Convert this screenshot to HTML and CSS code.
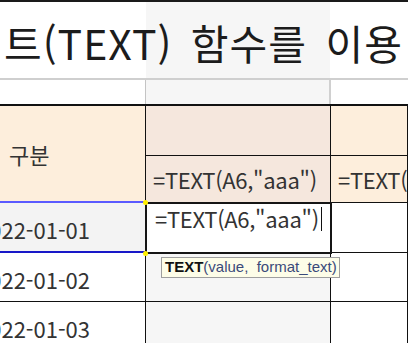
FILE: index.html
```html
<!doctype html>
<html lang="ko">
<head>
	<meta charset="UTF-8">
	<title>TEXT 함수</title>

	<link rel="stylesheet" href="styles.css">
</head>
<body>
	<div class="sheet">
		<div class="title">
			<h1>트(TEXT) 함수를 이용</h1>
		</div>
		<div class="spacer">
			<div class="col-a"></div>
			<div class="col-b"></div>
			<div class="col-c"></div>
		</div>

		<div class="grid">
			<div class="cell head head-a">구분</div>
			<div class="cell head head-b"></div>
			<div class="cell head head-c"></div>
			<div class="cell head head-b formula">=TEXT(A6,"aaa")</div>
			<div class="cell head head-c formula">=TEXT(A6,"aaa")</div>

			<div class="cell date selected"><span>2022-01-01</span></div>
			<div class="cell editing">
				<span class="edit-text">=TEXT(A6,"aaa")</span><span class="caret"></span>
				<div class="tip"><b>TEXT</b>(value,&nbsp; format_text)</div>
			</div>
			<div class="cell"></div>

			<div class="cell date"><span>2022-01-02</span></div>
			<div class="cell shaded"></div>
			<div class="cell"></div>

			<div class="cell date"><span>2022-01-03</span></div>
			<div class="cell shaded"></div>
			<div class="cell"></div>
		</div>
	</div>
</body>
</html>
```

FILE: styles.css
```css
html {
	box-sizing: border-box;
}

*, *:before, *:after {
	box-sizing: inherit;
}

body {
	margin: 0;
	width: 408px;
	height: 343px;
	overflow: hidden;
	background: #fff;
	font-family: "Noto Sans CJK KR", "Noto Sans", sans-serif;
	color: #222;
}

.sheet {
	border-top: 2px solid #1a1a1a;
}

.title {
	height: 78px;
	border-bottom: 2px solid #cfcfcf;
	background: linear-gradient(to right, #fff 146px, #f6f6f6 146px, #f6f6f6 330px, #fff 330px);
	overflow: hidden;
}

.title h1 {
	margin: 0;
	padding: 16px 0 0 4px;
	font-size: 41px;
	font-weight: normal;
	line-height: 48px;
	letter-spacing: 1px;
	word-spacing: 6px;
	white-space: nowrap;
	color: #1c1c1c;
}

.spacer {
	display: grid;
	grid-template-columns: 146px 185px 1fr;
	height: 26px;
	border-bottom: 2px solid #111;
}

.col-a, .col-b {
	border-right: 1px solid #c4c4c4;
}

.col-b {
	background: #f6f6f6;
	border-right: 2px solid #d0d0d0;
}

.grid {
	display: grid;
	grid-template-columns: 146px 185px 1fr;
	grid-template-rows: 50px 47px 50px 49px 49px;
}

.cell {
	border-right: 1px solid #111;
	border-bottom: 1px solid #111;
	font-size: 22px;
	display: flex;
	align-items: center;
	white-space: nowrap;
	overflow: hidden;
	color: #333;
}

.head-a {
	grid-row: span 2;
	background: #fdeedc;
	padding-left: 9px;
	border-bottom: 2px solid #5a5aff;
}

.head-b {
	background: #f5e7dd;
}

.head-c {
	background: #fdeedc;
}

.formula {
	padding-left: 7px;
	letter-spacing: -0.3px;
}

.date {
	justify-content: flex-end;
	padding-right: 55px;
	padding-top: 4px;
}

.selected {
	background: #f3f3f3;
	border-bottom: 2px solid #1818c8;
}

.shaded {
	background: #f6f6f6;
}

.editing {
	position: relative;
	overflow: visible;
	align-items: flex-start;
	padding: 0 0 0 9px;
	background: #fff;
	border: none;
	outline: 2px solid #151515;
	outline-offset: -1px;
	letter-spacing: -0.3px;
}

.editing:before, .editing:after {
	content: "";
	position: absolute;
	left: -3px;
	width: 5px;
	height: 5px;
	background: #ffef00;
	border-radius: 50%;
}

.editing:before {
	top: -3px;
}

.editing:after {
	bottom: -3px;
}

.edit-text {
	line-height: 30px;
}

.caret {
	display: inline-block;
	width: 1px;
	height: 24px;
	margin: 4px 0 0 2px;
	background: #111;
}

.tip {
	position: absolute;
	left: 15px;
	top: 54px;
	z-index: 2;
	padding: 1px 2px 2px 3px;
	border: 1px solid #9e9e9e;
	background: #fdfde8;
	font-family: "Liberation Sans", Arial, sans-serif;
	font-size: 15px;
	letter-spacing: 0;
	color: #3a4a7a;
	line-height: 16px;
}

.tip b {
	color: #111;
}
```
